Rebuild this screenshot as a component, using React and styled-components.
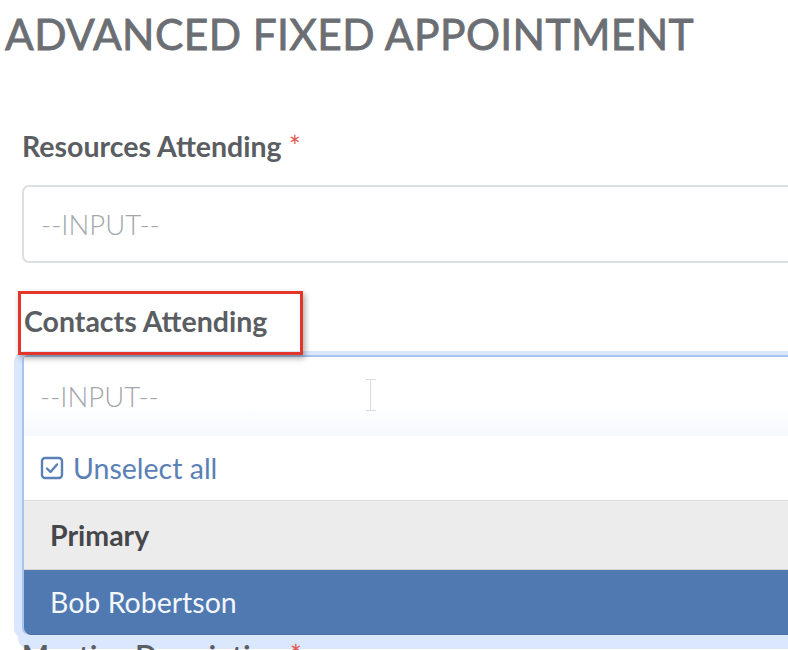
import React from "react";
import styled, { createGlobalStyle } from "styled-components";

const Global = createGlobalStyle`
  html, body {
    margin: 0;
    padding: 0;
    background: #fff;
    overflow: hidden;
  }
  body {
    font-family: Lato, "Open Sans", sans-serif;
  }
`;

const Page = styled.div`
  width: 788px;
  height: 650px;
  overflow: hidden;
`;

const Title = styled.h1`
  margin: 0;
  padding: 8px 0 0 5px;
  font-size: 42.5px;
  line-height: 52px;
  font-weight: 400;
  color: #6b6e73;
  -webkit-text-stroke: 0.8px #6b6e73;
  letter-spacing: 0.4px;
`;

const Form = styled.div`
  padding: 68px 0 0 22px;
  display: flex;
  flex-direction: column;
`;

const Label = styled.div`
  position: relative;
  font-size: 28.5px;
  line-height: 36px;
  font-weight: 700;
  color: #5a5d62;
  margin-top: ${(p) => p.$gap || 0}px;
  margin-left: ${(p) => p.$indent || 0}px;
  z-index: 1;
`;

const Star = styled.span`
  color: #e0564e;
  margin-left: 7px;
  font-weight: 400;
`;

const Annotation = styled.div`
  position: absolute;
  left: -6px;
  top: -12px;
  width: 279px;
  height: 58px;
  border: 3px solid #e2362b;
  box-shadow: 2px 3px 6px rgba(0, 0, 0, 0.35);
  pointer-events: none;
`;

const Input = styled.div`
  box-sizing: border-box;
  width: 820px;
  height: 78px;
  margin-top: 21px;
  border: 2px solid #dcdfe3;
  border-radius: 7px;
  display: flex;
  align-items: center;
  padding-left: 17px;
  font-size: 27.5px;
  font-weight: 300;
  color: #a3a7ac;
`;

const Dropdown = styled.div`
  width: 820px;
  margin-top: 16px;
  border-top: 2px solid #a8c4f1;
  border-left: 2px solid #a8c4f1;
  border-radius: 7px 0 0 7px;
  box-shadow: -4px 0 0 4px #dbe7fc, 0 10px 0 4px #dbe7fc;
  background: #fff;
`;

const DropInput = styled.div`
  position: relative;
  height: 79px;
  display: flex;
  align-items: center;
  padding-left: 16px;
  font-size: 27.5px;
  font-weight: 300;
  color: #a3a7ac;
  background: linear-gradient(#fff 60%, #f6f8fd);
`;

const Cursor = styled.div`
  position: absolute;
  left: 342px;
  top: 22px;
  width: 10px;
  height: 30px;
  border-top: 1px solid #dcdcdc;
  border-bottom: 1px solid #dcdcdc;
  &::after {
    content: "";
    position: absolute;
    left: 4px;
    top: 0;
    bottom: 0;
    border-left: 1.5px solid #dcdcdc;
  }
`;

const SelectAll = styled.div`
  height: 64px;
  display: flex;
  align-items: center;
  gap: 9px;
  padding-left: 16px;
  font-size: 28.5px;
  color: #5b80b6;
  border-bottom: 1px solid #dcdcdc;
`;

const Option = styled.div`
  height: ${(p) => (p.$selected ? 64 : 68)}px;
  display: flex;
  align-items: center;
  padding-left: 26px;
  font-size: 28.5px;
  font-weight: ${(p) => (p.$selected ? 400 : 700)};
  color: ${(p) => (p.$selected ? "#f3f6fb" : "#45474a")};
  background: ${(p) => (p.$selected ? "#5079b1" : "#ececec")};
  border-bottom: 1px solid ${(p) => (p.$selected ? "#4a70a6" : "#d6d6d6")};
  border-bottom-left-radius: ${(p) => (p.$selected ? 7 : 0)}px;
`;

const CheckIcon = () => (
  <svg width="24" height="24" viewBox="0 0 24 24" fill="none" stroke="#5b80b6" strokeWidth="2.4" strokeLinecap="round" strokeLinejoin="round">
    <rect x="2" y="2" width="20" height="20" rx="3" />
    <path d="M7 12.5l3.5 3.5L17 8.5" />
  </svg>
);

export default function App() {
  return (
    <Page>
      <Global />
      <Title>ADVANCED FIXED APPOINTMENT</Title>
      <Form>
        <Label>
          Resources Attending<Star>*</Star>
        </Label>
        <Input>--INPUT--</Input>
        <Label $gap={40} $indent={2}>
          Contacts Attending
          <Annotation />
        </Label>
        <Dropdown>
          <DropInput>
            --INPUT--
            <Cursor />
          </DropInput>
          <SelectAll>
            <CheckIcon />
            Unselect all
          </SelectAll>
          <Option>Primary</Option>
          <Option $selected>Bob Robertson</Option>
        </Dropdown>
        <Label $gap={2}>
          Meeting Description<Star>*</Star>
        </Label>
      </Form>
    </Page>
  );
}
